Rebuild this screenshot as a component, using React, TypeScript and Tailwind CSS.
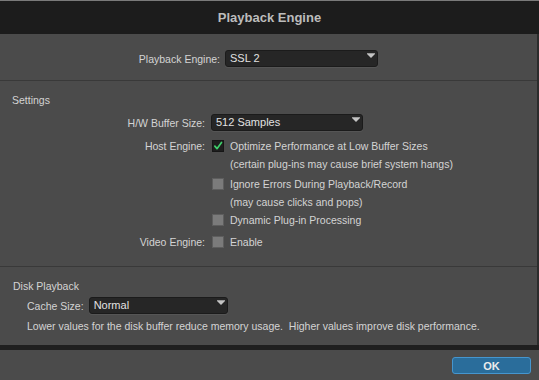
import React from "react";

function Select({ value, w }: { value: string; w: string }) {
  return (
    <div
      className={`relative h-[17px] ${w} bg-[#262626] border border-[#1b1b1b] rounded-[3px] flex items-center pl-[4px] text-[#e2e2e2] shadow-[0_1px_0_rgba(255,255,255,0.06)]`}
    >
      <span className="text-[11px] leading-none">{value}</span>
      <svg
        className="absolute right-[2px] top-[2px]"
        width="8"
        height="5"
        viewBox="0 0 8 5"
      >
        <rect x="0" y="0" width="8" height="1" fill="#9a9a9a" />
        <polygon points="0,1 8,1 4,5" fill="#c4c4c4" />
      </svg>
    </div>
  );
}

function Box({ checked }: { checked?: boolean }) {
  if (checked) {
    return (
      <div className="w-[12px] h-[12px] bg-[#1e1e1e] border border-[#161616] flex items-center justify-center shrink-0">
        <svg width="12" height="12" viewBox="0 0 12 12">
          <polyline
            points="2.2,6.2 4.8,9.2 10.2,1.8"
            fill="none"
            stroke="#3fd06b"
            strokeWidth="2"
            strokeLinecap="round"
            strokeLinejoin="round"
          />
        </svg>
      </div>
    );
  }
  return (
    <div className="w-[12px] h-[12px] bg-[#7b7b7b] border border-[#5e5e5e] shrink-0" />
  );
}

function Row({
  label,
  children,
  mt,
}: {
  label?: string;
  children: React.ReactNode;
  mt: string;
}) {
  return (
    <div className={`flex items-center h-[14px] ${mt}`}>
      <div className="w-[205px] text-right shrink-0">{label}</div>
      <div className="ml-[7px] flex items-center">{children}</div>
    </div>
  );
}

export default function App() {
  return (
    <div
      className="w-[539px] h-[380px] bg-[#4b4b4b] flex flex-col text-[10.5px] leading-[14px] text-[#d4d4d4] overflow-hidden"
      style={{ fontFamily: '"Liberation Sans", Arial, sans-serif' }}
    >
      <div className="h-px bg-[#7a7a7a] shrink-0" />
      <div className="h-[33px] bg-[#1c1c1c] flex items-center justify-center font-bold text-[13px] text-[#bcbcbc] shrink-0">
        Playback Engine
      </div>

      <div className="border-r-2 border-[#2c2c2c] flex flex-col">
        {/* Playback engine row */}
        <div className="h-[47px] pt-[16px] border-b border-[#393939] flex">
          <div className="w-[220px] text-right h-[17px] flex items-center justify-end">
            Playback Engine:
          </div>
          <div className="ml-[5px]">
            <Select value="SSL 2" w="w-[153px]" />
          </div>
        </div>

        {/* Settings */}
        <div className="pt-[13px] pb-[17px] border-b border-[#393939] flex flex-col">
          <div className="pl-[12px] h-[13px] leading-[13px]">Settings</div>
          <div className="flex items-center mt-[7px] h-[17px]">
            <div className="w-[205px] text-right shrink-0">H/W Buffer Size:</div>
            <div className="ml-[6px]">
              <Select value="512 Samples" w="w-[152px]" />
            </div>
          </div>
          <Row label="Host Engine:" mt="mt-[8px]">
            <Box checked />
            <span className="ml-[6px]">
              Optimize Performance at Low Buffer Sizes
            </span>
          </Row>
          <Row mt="mt-[4px]">
            <span className="ml-[18px]">
              (certain plug-ins may cause brief system hangs)
            </span>
          </Row>
          <Row mt="mt-[6px]">
            <Box />
            <span className="ml-[6px]">Ignore Errors During Playback/Record</span>
          </Row>
          <Row mt="mt-[4px]">
            <span className="ml-[18px]">(may cause clicks and pops)</span>
          </Row>
          <Row mt="mt-[4px]">
            <Box />
            <span className="ml-[6px]">Dynamic Plug-in Processing</span>
          </Row>
          <Row label="Video Engine:" mt="mt-[8px]">
            <Box />
            <span className="ml-[6px]">Enable</span>
          </Row>
        </div>

        {/* Disk playback */}
        <div className="pt-[13px] pb-[12px] flex flex-col">
          <div className="pl-[13px] h-[13px] leading-[13px]">Disk Playback</div>
          <div className="flex items-center mt-[4px] pl-[27px] h-[17px]">
            <span>Cache Size:</span>
            <div className="ml-[5px]">
              <Select value="Normal" w="w-[139px]" />
            </div>
          </div>
          <div className="pl-[27px] mt-[6px] h-[13px] leading-[13px]">
            Lower values for the disk buffer reduce memory usage.&nbsp; Higher
            values improve disk performance.
          </div>
        </div>
      </div>

      <div className="h-[5px] bg-[#1f1f1f] shrink-0" />

      <div className="flex-1 flex justify-end items-start pt-[7px] pr-[8px]">
        <div className="w-[79px] h-[17px] bg-[#2a6d9b] border border-[#4596cf] rounded-[3px] flex items-center justify-center font-bold text-[11px] text-[#ececec]">
          OK
        </div>
      </div>
    </div>
  );
}
